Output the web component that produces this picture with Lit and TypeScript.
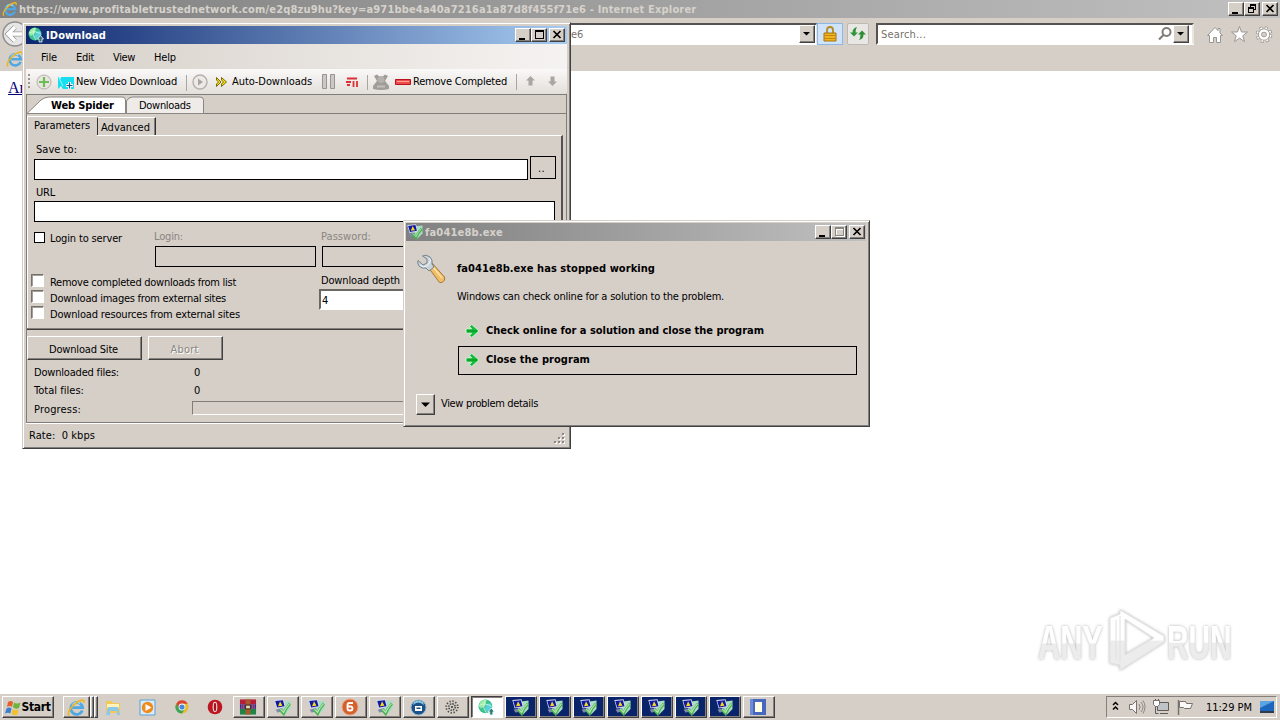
import { LitElement, html, css, svg } from 'lit';
import { customElement, property } from 'lit/decorators.js';

// Single line of text, tracked so that it fills the given width.
@customElement('fit-text')
export class FitText extends LitElement {
    @property({ type: Number }) width = 0;
    @property({ type: String }) text = '';

    static styles = css`
    :host {
      display: inline-block;
      height: 14px;
      line-height: 16px;
      white-space: pre;
      flex: none;
    }
  `;

    updated() {
        const span = this.renderRoot.querySelector('span')!;
        span.style.letterSpacing = '0';
        const natural = span.getBoundingClientRect().width;
        span.style.letterSpacing = `${(this.width - natural) / this.text.length}px`;
    }

    render() {
        return html`<span>${this.text}</span>`;
    }
}

const t = (text: string, width: number, cls = '') =>
    html`<fit-text class=${cls} .text=${text} .width=${width}></fit-text>`;

const ieIcon = (size: number) => html`
  <svg width=${size} height=${size} viewBox="0 0 16 16">
    <path d="M12.9 10.6A5 5 0 1 1 13.2 8.2H4.6" fill="none" stroke="#4fa8e4" stroke-width="2.3"/>
    <path d="M4.6 6.4A4 4 0 0 1 11 4.6" fill="none" stroke="#b5e3fa" stroke-width="1.1"/>
    <path d="M2 14.6C-.5 13 3.6 6.4 9 3.2c3.6-2 6-2 5 .9" fill="none" stroke="#efb51d" stroke-width="1.4"/>
  </svg>`;

const globeIcon = (size: number) => html`
  <svg width=${size} height=${size} viewBox="0 0 16 16">
    <circle cx="7" cy="7" r="6.5" fill="#3cc28e"/>
    <path d="M2 3Q5 0 8 1L7 6 3 9 1 7Z" fill="#9aeaa4"/>
    <path d="M8 5l4-1 1 4-4 4-3-2Z" fill="#5ccfdc"/>
    <path d="M1 6q6-3 12 1M7 1q-4 6 1 12" fill="none" stroke="#d6ffe6" stroke-width=".7"/>
    <path d="M12.500 8.500 15.500 12h-1.500v3h-3v-3H9.500z" fill="#2c7b74" stroke="#eef8ff" stroke-width=".8"/>
  </svg>`;

const appIcon = (size: number) => html`
  <svg width=${size} height=${size} viewBox="0 0 16 16">
    <path d="M7 2.500l8.500-1v8l-5 5-5-3Z" fill="#a9dcc4"/>
    <path d="M.3 1 9 .2l2 7.300L2.500 9Z" fill="#d4dcf2"/>
    <path d="M1.200 1.900 8.400 1.100 9.900 6.800 3 8Z" fill="#1118a0"/>
    <path d="M5.700 2 8 6.300 3.800 6.800Z" fill="#f7d820"/>
    <path d="M1.500 10l6-1.500 1 2.300-5 2.200Z" fill="#8088b0"/>
    <path d="M5.500 10 9 13.800Q11 8.500 15 4.500" fill="none" stroke="#4cb052" stroke-width="2.600"/>
    <path d="M6 9.600 9 12.700Q11 8 14.500 4.500" fill="none" stroke="#b2ecaa" stroke-width="1"/>
  </svg>`;

const goArrow = html`
  <svg class="go" width="15" height="14" viewBox="0 0 15 14">
    <path d="M1 4.800H6.600L4.400 2.200 6.800.6 14 7 6.800 13.400 4.400 11.800 6.600 9.200H1Z" fill="#14bd3c" stroke="#e8f5e4" stroke-width=".8"/>
    <path d="M2 7H12" stroke="#0a951e" stroke-width="1.200"/>
  </svg>`;

const glyphs: Record<string, unknown> = {
    min: svg`<path d="M3 9h6v2H3z"/>`,
    max: svg`<path d="M3 1h9v9H3zM4 3v6h7V3z" fill-rule="evenodd"/>`,
    maxOff: svg`<path d="M4 2h9v9H4zM5 4v6h7V4z" fill="#fff" fill-rule="evenodd"/><path d="M3 1h9v9H3zM4 3v6h7V3z" fill="#8a8681" fill-rule="evenodd"/>`,
    restore: svg`<path d="M5 1h6v6H9v3H3V4h2zM6 3v1h3v2h1V3zM4 6v3h4V6z" fill-rule="evenodd"/>`,
    close: svg`<path d="M3.500 2l7 7M10.500 2l-7 7" stroke="#000" stroke-width="1.700"/>`,
    down: svg`<path d="M3 4h7L6.500 7.500z"/>`,
};

const caption = (kind: string) => html`
  <button class="raised cap ${kind}"><svg width="14" height="12" viewBox="0 0 14 12">${glyphs[kind]}</svg></button>`;

const icons: Record<string, unknown> = {
    explorer: html`<svg width="18" height="18" viewBox="0 0 18 18"><path d="M2 3h6l1 2h7v10H2z" fill="#f0c95a"/><path d="M3 6h12v4H3z" fill="#fff3bc"/><path d="M4 9h10l2 8h-3v-4H6v4H2z" fill="#8cc9e8"/></svg>`,
    player: html`<svg width="17" height="17" viewBox="0 0 17 17"><path d="M1 1h15v15H1z" fill="#d7ecfb" stroke="#5c9fd4"/><circle cx="8.500" cy="8.500" r="5.700" fill="#f08a1c"/><path d="M6.500 5v7l6-3.500z" fill="#fff"/></svg>`,
    chrome: html`<svg width="16" height="16" viewBox="0 0 16 16"><circle cx="8" cy="8" r="6.500" fill="#e8bd28"/><path d="M2.300 4.700A6.500 6.500 0 0 1 13.700 4.700H8L5 9.500Z" fill="#d94436"/><path d="M2.300 4.700A6.500 6.500 0 0 0 8 14.500L11 9.700H5Z" fill="#3fa356"/><circle cx="8" cy="8" r="3.400" fill="#fff"/><circle cx="8" cy="8" r="2.600" fill="#4688dc"/></svg>`,
    opera: html`<svg width="16" height="16" viewBox="0 0 16 16"><circle cx="8" cy="8" r="7.300" fill="#bd1622"/><ellipse cx="8" cy="8" rx="2.400" ry="5.200" fill="#ead9d6"/><ellipse cx="8" cy="8" rx="1.200" ry="4.200" fill="#a8111c"/></svg>`,
    rar: html`<svg width="18" height="18" viewBox="0 0 19 18"><path d="M1 1h17v5H1z" fill="#b51f3a"/><path d="M1 6h17v5H1z" fill="#352f9d"/><path d="M1 11h17v6H1z" fill="#218447"/><path d="M7 1h5v16H7z" fill="#a85a2c"/><path d="M3 6v5M5 6v5M14 6v5M16 6v5" stroke="#c85b6b"/><path d="M7 7h5v4H7z" fill="#e8dcae" stroke="#3a2310"/></svg>`,
    orb: html`<svg width="18" height="18" viewBox="0 0 18 18"><circle cx="9" cy="9" r="8" fill="#d4602c" stroke="#e9a182"/><path d="M12 5H8.500Q6.500 5 6.500 7v3.500q0 2 2 2h1q2 0 2-2t-2-2h-3" fill="none" stroke="#fff" stroke-width="1.800"/></svg>`,
    blueOrb: html`<svg width="17" height="17" viewBox="0 0 17 17"><circle cx="8.500" cy="8.500" r="7.500" fill="#1c5288" stroke="#8fb4cd"/><path d="M3 6q5-5 11 0l-1-3q-5-3-9 0z" fill="#8bc8e0"/><path d="M5 7h7v5H5z" fill="#fff"/><path d="M6.500 8.500h4v1.500h-4z" fill="#224d78"/></svg>`,
    gear: html`<svg width="16" height="16" viewBox="0 0 16 16"><circle cx="8" cy="8" r="5.800" fill="none" stroke="#4d4b48" stroke-width="1.800" stroke-dasharray="1.300 1.700"/><circle cx="8" cy="8" r="3.200" fill="none" stroke="#3d3b39" stroke-width="1.400" stroke-dasharray="1.500 1"/><circle cx="8" cy="8" r="1" fill="#333"/></svg>`,
    book: html`<svg width="16" height="16" viewBox="0 0 16 16"><path d="M0 0h16v16H0z" fill="#4868bd"/><path d="M0 0h3v16H0z" fill="#6d8bd8"/><path d="M5 3h7v10H5z" fill="#fffde4"/></svg>`,
    globe: globeIcon(17),
    app: appIcon(17),
};

const tasks: [string, string][] = [
    ['rar', ''], ['app', ''], ['app', ''], ['orb', ''], ['app', ''], ['blueOrb', ''], ['gear', ''], ['globe', 'active'],
    ...Array.from({ length: 7 }, (): [string, string] => ['app', 'navy']),
    ['book', ''],
];

const siteOptions: [string, number][] = [
    ['Remove completed downloads from list', 186],
    ['Download images from external sites', 176],
    ['Download resources from external sites', 190],
];

const shared = css`
    * {
      box-sizing: border-box;
    }

    svg {
      display: block;
      flex: none;
    }

    button {
      font: inherit;
      padding: 0;
      color: #000;
      background: #d6cfc8;
      display: flex;
      align-items: center;
      justify-content: center;
      flex: none;
    }

    .raised {
      border: 1px solid;
      border-color: #fff #404040 #404040 #fff;
      box-shadow: inset -1px -1px #85807b;
    }

    .cap {
      width: 16px;
      height: 14px;
    }

    .cap.close {
      margin-left: 2px;
    }

    .caps {
      display: flex;
    }

    .title {
      display: flex;
      align-items: center;
      height: 18px;
      padding-right: 2px;
      font-weight: bold;
      color: #fff;
    }

    .grow {
      flex: 1;
    }

    .bold {
      font-weight: bold;
    }
`;

const frame = css`
    :host {
      display: flex;
      flex-direction: column;
      box-sizing: border-box;
      padding: 3px;
      background: #d6cfc8;
      border: 1px solid;
      border-color: #d6cfc8 #404040 #404040 #d6cfc8;
      box-shadow: inset 1px 1px #fff, inset -1px -1px #808080;
    }
`;

@customElement('download-window')
export class DownloadWindow extends LitElement {
    static styles = [shared, frame, css`
    .title {
      background: linear-gradient(90deg, #0e2870, #a6caf0);
      gap: 2px;
      padding: 0 2px;
    }

    .menu {
      height: 25px;
      padding: 0 0 0 15px;
      display: flex;
      align-items: center;
      background: linear-gradient(90deg, #d6cfc8, #f5f3f1);
    }

    .menu fit-text {
      margin-right: 19px;
    }

    .tools {
      height: 25px;
      display: flex;
      align-items: center;
      background: linear-gradient(#faf9f8, #e3dfda);
      border-radius: 0 0 3px 0;
    }

    .tools fit-text {
      margin-top: -1px;
    }

    .grip {
      width: 2px;
      height: 15px;
      margin-left: 2px;
      background: repeating-linear-gradient(#9b9690 0 2px, transparent 2px 4px);
    }

    .pane {
      height: 329px;
      border: 1px solid #807c78;
      box-shadow: 0 1px #fff;
    }

    .tabs {
      height: 19px;
    }

    .tabs text {
      font-size: 11px;
    }

    .strip {
      height: 21px;
      display: flex;
      align-items: flex-end;
    }

    .strip div {
      border-top: 1px solid #fff;
    }

    .current {
      width: 70px;
      height: 20px;
      padding: 1px 0 0 6px;
      margin-bottom: -1px;
      background: #d6cfc8;
      border-left: 1px solid #fff;
      position: relative;
    }

    .other {
      width: 59px;
      height: 18px;
      padding: 2px 0 0 3px;
      border-left: 1px solid #303030;
      border-right: 1px solid #303030;
      box-shadow: inset -1px 0 #85807b;
    }

    .page {
      width: 536px;
      height: 194px;
      padding: 6px 0 0 6px;
      border: 1px solid #fff;
      border-right: 2px solid #55524f;
      border-bottom: 0;
    }

    .rule {
      height: 2px;
      margin-top: -1px;
      border-top: 1px solid #85807b;
      background: #404040;
    }

    .field {
      height: 21px;
      border: 1px solid #000;
      background: #fff;
    }

    .save {
      display: flex;
      height: 24px;
    }

    .save .field {
      width: 494px;
      margin: 3px 2px 0 0;
    }

    .save button {
      width: 26px;
      height: 23px;
      border: 1px solid #000;
      padding-right: 3px;
    }

    .in {
      margin-left: 2px;
    }

    .block {
      display: block;
    }

    .url {
      margin: 5px 0 2px 2px;
    }

    .wide {
      width: 521px;
    }

    .login {
      display: grid;
      grid-template-columns: 120px 167px 1fr;
      height: 50px;
      padding-top: 7px;
      color: #898580;
    }

    .check {
      display: flex;
      align-items: center;
      gap: 4px;
      color: #000;
    }

    .login .check {
      height: 18px;
    }

    .box {
      width: 12px;
      height: 12px;
      border: 1px solid #000;
      background: #fff;
    }

    .login .box {
      width: 11px;
      height: 11px;
      margin: -1px 1px 0 0;
    }

    .login .field {
      margin: 3px 0 0 1px;
      width: 161px;
      background: #d6cfc8;
    }

    .options {
      display: flex;
      margin-left: -3px;
      padding-top: 2px;
    }

    .list {
      width: 288px;
      flex: none;
    }

    .depths {
      flex: 1;
    }

    .options .check {
      height: 16px;
      gap: 6px;
    }

    .options .box {
      width: 13px;
      height: 13px;
      margin-top: -3px;
      border: 1px solid;
      border-color: #75716d #fff #fff #75716d;
      box-shadow: inset 1px 1px #a39e99;
    }

    .depths > fit-text {
      margin-top: -1px;
    }

    .depth {
      height: 21px;
      margin-top: 2px;
      padding: 2px 1px;
      border: 2px solid;
      border-color: #6b6763 #fff #fff #6b6763;
      background: #fff;
    }

    .actions {
      display: flex;
      gap: 6px;
      margin-top: 6px;
    }

    .actions button {
      height: 24px;
      width: 115px;
      padding: 1px 2px 0 0;
    }

    .actions .off {
      width: 75px;
      color: #898580;
      text-shadow: 1px 1px #fff;
    }

    .stats {
      display: grid;
      grid-template-columns: 158px 1fr;
      grid-template-rows: 18px 18px 19px;
      align-items: center;
      padding: 3px 0 0 7px;
    }

    .stats .num {
      margin-left: 2px;
    }

    .bar {
      height: 14px;
      margin: -1px 8px 0 0;
      border: 1px solid;
      border-color: #807c78 #fff #fff #807c78;
    }

    .status {
      flex: 1;
      display: flex;
      align-items: center;
      justify-content: space-between;
      padding: 1px 0 0 3px;
    }

    .status svg {
      align-self: flex-end;
      margin-bottom: 1px;
    }
  `];

    render() {
        return html`
      <div class="title">
        ${globeIcon(16)}${t('IDownload', 60)}<span class="grow"></span>
        <div class="caps">${caption('min')}${caption('max')}${caption('close')}</div>
      </div>
      <div class="menu">${t('File', 16)}${t('Edit', 18)}${t('View', 22)}${t('Help', 22)}</div>
      <div class="tools">
        <div class="grip"></div>
        <svg width="46" height="22" viewBox="30 70 46 22">
          <circle cx="44" cy="81" r="7" fill="#e9e6e2" stroke="#b4b0ab"/>
          <path d="M44 76v10M39 81h10" stroke="#6fbd57" stroke-width="2.200"/>
          <path d="M58 76l3 2v-2h13v12H63l-2-3-3 3z" fill="#18dff0"/>
          <path d="M59 77l4 8" stroke="#8ffaff"/>
          <path d="M69.500 81v7M66 84.500h7" stroke="#fff" stroke-width="3"/>
          <path d="M69.500 81.500v6M66.500 84.500h6" stroke="#14508a" stroke-width="1.200"/>
        </svg>
        ${t('New Video Download', 101)}
        <svg width="55" height="22" viewBox="177 70 55 22">
          <path d="M186.500 74v16" stroke="#aaa59f"/>
          <circle cx="200" cy="81" r="7" fill="#eceae7" stroke="#b4b0ab" stroke-width="1.400"/>
          <path d="M198 77.500v7l5-3.500z" fill="#a9a5a0"/>
          <path d="M216.500 76.500l4.500 4.500-4.500 4.500v-2.500l2-2-2-2zM221.500 76.500l5 4.500-5 4.500v-2.500l2-2-2-2z" fill="#ffe000" stroke="#77670c"/>
        </svg>
        ${t('Auto-Downloads', 80)}
        <svg width="101" height="22" viewBox="312 70 101 22">
          <path d="M322.500 73.500h4v14h-4zM330.500 73.500h4v14h-4z" fill="#cbc8c5" stroke="#98948f"/>
          <path d="M347 77.500h10M346 81h5M347 84h3M353.500 80v6M357 80v6" stroke="#de2f36" stroke-width="1.800"/>
          <path d="M367.500 74v15" stroke="#aaa59f"/>
          <path d="M374 75l3-1.500 4 3.500 4-3.500 3 1.500-3 5 4 5v3q-8 2-16 0v-3l4-5z" fill="#a09c98"/>
          <circle cx="381" cy="78.500" r="3.500" fill="#b5b1ad"/>
          <path d="M377 85.500h8" stroke="#c3bfbb" stroke-width="2"/>
          <path d="M395.500 78.500h15v5h-15z" fill="#f04a4a" stroke="#b81420"/>
          <path d="M397 80.500h12" stroke="#ffa09a"/>
        </svg>
        ${t('Remove Completed', 94)}
        <svg width="56" height="22" viewBox="507 71 56 22">
          <path d="M516.500 74v16" stroke="#aaa59f"/>
          <path d="M530.500 76l4.500 4.500h-2.500v5h-4v-5H526z" fill="#aaa6a2"/>
          <path d="M552.500 86l4.500-4.500h-2.500v-5h-4v5H548z" fill="#aaa6a2"/>
        </svg>
      </div>
      <div class="pane">
        <div class="tabs">
          <svg width="539" height="19" viewBox="27 95 539 19">
            <path d="M27 113.500H566" stroke="#807c78"/>
            <path d="M126.500 113.500V101q2-4 6-4H200q3.500 0 3.500 3v13.500z" fill="#eeebe8" stroke="#8b8782"/>
            <path d="M27 113.500 41 100q4-3 8-3h73q3.500 0 3.500 3v13.500z" fill="#fff" stroke="#8b8782"/>
            <text x="51" y="109" font-weight="bold" textLength="63">Web Spider</text>
            <text x="139" y="109" textLength="52">Downloads</text>
          </svg>
        </div>
        <div class="strip">
          <div class="current">${t('Parameters', 56)}</div>
          <div class="other">${t('Advanced', 49)}</div>
        </div>
        <div class="page">
          ${t('Save to:', 41, 'in block')}
          <div class="save"><div class="field"></div><button>${t('..', 7)}</button></div>
          ${t('URL', 19, 'url block')}
          <div class="field wide"></div>
          <div class="login">
            <div class="check"><span class="box"></span>${t('Login to server', 72)}</div>
            <div>${t('Login:', 29, 'block')}<div class="field"></div></div>
            <div>${t('Password:', 50, 'block')}<div class="field"></div></div>
          </div>
          <div class="options">
            <div class="list">
              ${siteOptions.map(([label, width]) => html`
                <div class="check"><span class="box"></span>${t(label, width)}</div>`)}
            </div>
            <div class="depths">
              ${t('Download depth', 79, 'in block')}
              <div class="depth">${t('4', 6, 'block')}</div>
            </div>
          </div>
        </div>
        <div class="rule"></div>
        <div class="actions">
          <button class="raised">${t('Download Site', 69)}</button>
          <button class="raised off">${t('Abort', 28)}</button>
        </div>
        <div class="stats">
          ${t('Downloaded files:', 85)}${t('0', 6, 'num')}
          ${t('Total files:', 50)}${t('0', 6, 'num')}
          ${t('Progress:', 47)}<div class="bar"></div>
        </div>
      </div>
      <div class="status">
        ${t('Rate:  0 kbps', 66)}
        <svg width="14" height="13" viewBox="0 0 14 13">
          <path d="M9 2h2v2H9zM5 6h2v2H5zM9 6h2v2H9zM1 10h2v2H1zM5 10h2v2H5zM9 10h2v2H9z" fill="#fff" transform="translate(1 1)"/>
          <path d="M9 2h2v2H9zM5 6h2v2H5zM9 6h2v2H9zM1 10h2v2H1zM5 10h2v2H5zM9 10h2v2H9z" fill="#8b8782"/>
        </svg>
      </div>
    `;
    }
}

@customElement('crash-dialog')
export class CrashDialog extends LitElement {
    static styles = [shared, frame, css`
    :host {
      padding: 2px 3px 3px 2px;
    }

    .title {
      background: linear-gradient(90deg, #808080, #c0c0c0);
      color: #d6d2cb;
      gap: 2px;
      padding: 0 1px;
    }

    .body {
      display: flex;
      padding: 13px 10px 0;
      gap: 11px;
    }

    .main {
      flex: 1;
      padding-top: 7px;
    }

    .main > fit-text {
      display: block;
      margin-bottom: 14px;
    }

    .choice {
      display: flex;
      align-items: center;
      gap: 6px;
      height: 29px;
      width: 399px;
      padding: 0 0 3px 6px;
      margin-left: 1px;
      border: 1px solid transparent;
    }

    .choice.focus {
      border-color: #000;
    }

    .go {
      margin-top: 2px;
    }

    .details {
      display: flex;
      gap: 6px;
      margin: 19px 0 0 10px;
    }

    .details button {
      width: 19px;
      height: 21px;
    }

    .details fit-text {
      margin-top: 2px;
    }
  `];

    render() {
        return html`
      <div class="title">
        ${appIcon(16)}${t('fa041e8b.exe', 78)}<span class="grow"></span>
        <div class="caps">${caption('min')}${caption('maxOff')}${caption('close')}</div>
      </div>
      <div class="body">
        <svg width="30" height="30" viewBox="0 0 30 30">
          <path d="M12 13l4-4 12.500 14q1 4-3 5.500h-2z" fill="#f0bd68" stroke="#a67834"/>
          <path d="M17 13l9 11" stroke="#ffe2a4" stroke-width="1.500"/>
          <path d="M2 6.500 7 11l4-2V5L6.500 2Q10 0 14 3q3 3 2 7l2 3-5 4-3-3q-4 1-7-2-2-3-1-5.500z" fill="#c9d3da" stroke="#75818b"/>
          <path d="M4 11q3 3 7 1l3-4q1-3-1-4" fill="none" stroke="#f4f9fc"/>
        </svg>
        <div class="main">
          ${t('fa041e8b.exe has stopped working', 198, 'bold')}
          ${t('Windows can check online for a solution to the problem.', 267)}
          <div class="choice">${goArrow}${t('Check online for a solution and close the program', 278, 'bold')}</div>
          <div class="choice focus">${goArrow}${t('Close the program', 104, 'bold')}</div>
        </div>
      </div>
      <div class="details">
        <button class="raised"><svg width="15" height="13" viewBox="0 0 15 13"><path d="M3 4.500h9L7.500 9z"/></svg></button>
        ${t('View problem details', 97)}
      </div>
    `;
    }
}

@customElement('task-bar')
export class TaskBar extends LitElement {
    static styles = [shared, css`
    :host {
      display: flex;
      align-items: center;
      box-sizing: border-box;
      height: 28px;
      padding: 3px 3px 1px 2px;
      background: #d6cfc8;
      box-shadow: inset 0 2px #fff, inset 0 1px #d6cfc8;
    }

    .start {
      width: 52px;
      height: 22px;
      font-size: 12px;
      padding-right: 1px;
    }

    .start fit-text {
      margin-top: -2px;
    }

    .ie {
      width: 27px;
      height: 22px;
      margin-left: 9px;
    }

    .stacked {
      width: 4px;
      height: 22px;
      background: #d6cfc8;
    }

    .launch {
      display: flex;
      width: 131px;
      margin: 0 2px;
      padding: 0 8px 0 4px;
      justify-content: space-between;
      align-items: center;
    }

    .tasks {
      display: flex;
      gap: 2px;
      flex: 1;
    }

    .tasks button {
      width: 32px;
      height: 22px;
      padding-right: 2px;
    }

    .tasks .active {
      background: #fff;
      border-color: #404040 #fff #fff #404040;
      box-shadow: inset 1px 1px #85807b;
    }

    .tasks .navy {
      background: #0a246a;
    }

    .tray {
      width: 171px;
      height: 22px;
      display: flex;
      align-items: center;
      border: 1px solid;
      border-color: #85807b #fff #fff #85807b;
    }
  `];

    render() {
        return html`
      <button class="raised start">
        <svg width="17" height="17" viewBox="0 0 17 17">
          <path d="M3 3q3-2 5 0L7 8Q5 6 2 8z" fill="#e4602a"/>
          <path d="M9 3.500q3 2 6.500 0L14 9q-3 1.500-6-.5z" fill="#6eb43c"/>
          <path d="M1.500 9.500q3-2 5 0l-1.200 5Q3 13 0 14.500z" fill="#3a80cf"/>
          <path d="M7.700 10q3 2 6 .5L12.500 15.500q-3 1.500-6-.5z" fill="#f2c12c"/>
        </svg>
        ${t('Start', 29, 'bold')}
      </button>
      <button class="raised ie">${ieIcon(19)}</button>
      <div class="raised stacked"></div>
      <div class="raised stacked"></div>
      <div class="launch">${icons.explorer}${icons.player}${icons.chrome}${icons.opera}</div>
      <div class="tasks">${tasks.map(([icon, state]) => html`<button class="raised ${state}">${icons[icon]}</button>`)}</div>
      <div class="tray">
        <svg width="99" height="20" viewBox="1107 697 99 20">
          <path d="M1113 705l2.500-2.500 2.500 2.500M1113 709.500l2.500-2.500 2.500 2.500" fill="none" stroke="#000" stroke-width="1.500"/>
          <path d="M1129.500 704.500h3l4-4v13l-4-4h-3z" fill="#f7f6f5" stroke="#75716d"/>
          <path d="M1139 704q2 3 0 6M1141 702q4 5 0 10M1143 700.500q4 6 0 13" fill="none" stroke="#8b8782"/>
          <path d="M1157.500 702.500h11v8h-11z" fill="#bfc3c6" stroke="#5e5b58"/>
          <path d="M1160 713.500h8M1155.500 706v7.500h3M1155.500 700v-1M1158.500 700v-1" fill="none" stroke="#5e5b58"/>
          <path d="M1153.500 700.500h6v4l-2 2h-2l-2-2z" fill="#fff" stroke="#75716d"/>
          <path d="M1178.500 700v15" stroke="#75716d" stroke-width="1.500"/>
          <path d="M1179.500 701.500h6l1 2h6l-2 5h-6l-1-1h-4z" fill="#faf9f8" stroke="#75716d"/>
        </svg>
        ${t('11:29 PM', 46)}<span class="grow"></span>
        <svg width="18" height="16" viewBox="0 0 18 16"><path d="M2 2h14v10H2z" fill="#1c66bd"/><path d="M2 2h14L2 9z" fill="#5aa4e4"/><path d="M2 12h14v2H2z" fill="#303a49"/></svg>
      </div>
    `;
    }
}

@customElement('app-root')
export class AppRoot extends LitElement {
    static styles = [shared, css`
    :host {
      display: flex;
      flex-direction: column;
      position: relative;
      box-sizing: border-box;
      width: 1280px;
      height: 720px;
      overflow: hidden;
      background: #fff;
      font: 11px "DejaVu Sans Condensed", "DejaVu Sans", sans-serif;
      font-stretch: condensed;
      color: #000;
    }

    .title {
      background: linear-gradient(90deg, #808080, #c0c0c0);
      color: #d6d2cb;
      padding-left: 2px;
      gap: 1px;
    }

    .title > fit-text {
      margin-top: -1px;
    }

    .nav {
      height: 31px;
      display: flex;
      align-items: center;
      padding: 0 0 0 2px;
      background: #d6cfc8;
    }

    .well {
      height: 22px;
      flex: none;
      display: flex;
      align-items: center;
      background: #fff;
      color: #75716d;
      border: 2px solid;
      border-color: #55524f #e9e6e2 #fff #55524f;
    }

    .address {
      width: 779px;
      margin: 0 0 0 8px;
      border-right-width: 1px;
      justify-content: flex-end;
    }

    .address fit-text {
      margin-right: 216px;
    }

    .address .drop {
      margin-right: 1px;
    }

    .drop {
      width: 16px;
      height: 18px;
    }

    .lock {
      width: 26px;
      height: 22px;
      background: #cfe3fb;
      border: 1px solid #8db7e4;
    }

    .refresh {
      width: 22px;
      height: 22px;
      margin: 0 7px 0 4px;
      background: #e9e7e4;
      border: 1px solid #bdb9b4;
      border-radius: 2px;
    }

    .search {
      width: 318px;
      margin-right: 6px;
      padding-left: 3px;
    }

    .search .drop {
      margin-right: 3px;
    }

    .tabbar {
      height: 22px;
      padding: 1px 0 0 6px;
      background: #d6cfc8;
    }

    .content {
      flex: 1;
      padding: 7px 8px;
      font: 16px/20px "Liberation Serif", serif;
    }

    .content a {
      color: #00007a;
      text-decoration: underline;
    }

    download-window {
      position: absolute;
      left: 22px;
      top: 22px;
      width: 549px;
      height: 427px;
    }

    crash-dialog {
      position: absolute;
      left: 403px;
      top: 220px;
      width: 467px;
      height: 207px;
    }

    .watermark {
      position: absolute;
      left: 1020px;
      top: 602px;
    }

    .watermark text {
      font: bold 48px "Liberation Sans", sans-serif;
    }
  `];

    render() {
        return html`
      <div class="title">
        ${ieIcon(16)}${t('https://www.profitabletrustednetwork.com/e2q8zu9hu?key=a971bbe4a40a7216a1a87d8f455f71e6 - Internet Explorer', 677)}<span class="grow"></span>
        <div class="caps">${caption('min')}${caption('restore')}${caption('close')}</div>
      </div>
      <div class="nav">
        <svg width="28" height="28" viewBox="0 0 28 28">
          <circle cx="13" cy="14" r="12" fill="#e7e6e6" stroke="#8f8e8e" stroke-width="1.500"/>
          <path d="M13 7l-7 7 7 7M7 14h14" fill="none" stroke="#9b9b9b" stroke-width="5"/>
          <path d="M13 7l-7 7 7 7M7 14h14" fill="none" stroke="#fff" stroke-width="3.400"/>
        </svg>
        <div class="well address">${t('e6', 12)}
          <button class="raised drop"><svg width="14" height="12" viewBox="0 0 14 12">${glyphs.down}</svg></button>
        </div>
        <button class="lock">
          <svg width="16" height="18" viewBox="0 0 16 18"><path d="M5 8V5q0-3 3-3t3 3v3" fill="none" stroke="#b58b20" stroke-width="1.800"/><path d="M2 8h12v8H2z" fill="#eeb31e" stroke="#a8750c"/><path d="M2 10.500h12M2 13.500h12" stroke="#c28812"/></svg>
        </button>
        <button class="refresh">
          <svg width="18" height="16" viewBox="0 0 18 16"><path d="M1 6.500h2.500Q3.500 2 8 1 6.500 3 6.500 6.500H9L5 10.500z" fill="#2f9638"/><path d="M9 8.500l4-4 4 4h-2.500q0 4.500-4.500 5.500 1.500-2 1.500-5.500z" fill="#2f8d36"/></svg>
        </button>
        <div class="well search">
          ${t('Search...', 45)}<span class="grow"></span>
          <svg width="16" height="16" viewBox="0 0 16 16"><circle cx="9.500" cy="6" r="4" fill="none" stroke="#807c78" stroke-width="2"/><path d="M6.500 9 2 13.500" stroke="#807c78" stroke-width="2.200"/></svg>
          <button class="raised drop"><svg width="14" height="12" viewBox="0 0 14 12">${glyphs.down}</svg></button>
        </div>
        <svg width="76" height="24" viewBox="1200 23 76 24">
          <g fill="#fff" stroke="#9a9691">
            <path d="M1207.500 36.500 1215 28.500l3 3v-2h2v4.500l2.500 2.500h-2v7h-4v-5h-3v5h-4v-7z"/>
            <path d="M1239.500 27.500l2 5.500h6l-4.700 3.700 1.700 6-5-3.600-5 3.600 1.700-6-4.700-3.700h6z"/>
          </g>
          <circle cx="1264" cy="35.500" r="6.300" fill="none" stroke="#9a9691" stroke-width="4" stroke-dasharray="2.700 2.250"/>
          <circle cx="1264" cy="35.500" r="6" fill="none" stroke="#fff" stroke-width="3" stroke-dasharray="1.700 3.010" stroke-dashoffset="-.5"/>
          <circle cx="1264" cy="35.500" r="4" fill="none" stroke="#9a9691" stroke-width="4"/>
          <circle cx="1264" cy="35.500" r="4" fill="none" stroke="#fff" stroke-width="2.400"/>
        </svg>
      </div>
      <div class="tabbar">${ieIcon(18)}</div>
      <div class="content"><a>Ar</a></div>
      <task-bar></task-bar>

      <svg class="watermark" width="240" height="76" viewBox="1020 602 240 76">
        <defs>
          <linearGradient id="fade" x1="0" y1="0" x2="0" y2="1">
            <stop offset=".5" stop-color="#fff"/><stop offset=".52" stop-color="#ececec"/>
          </linearGradient>
          <filter id="soft" x="-10%" y="-10%" width="120%" height="130%">
            <feDropShadow dx="0" dy="0" stdDeviation="1.500" flood-color="#777" flood-opacity=".6"/>
          </filter>
        </defs>
        <g filter="url(#soft)" fill="url(#fade)">
          <text transform="translate(1038 659) scale(.64 1)">ANY</text>
          <text transform="translate(1167 659) scale(.62 1)">RUN</text>
          <path d="M1120 610l44 26v6l-44 28v-5l-10-2v-45l10-4zm5 9v36l29-17z" fill-rule="evenodd" stroke="#e2e2e2"/>
          <path d="M1116 620v40M1120 616v46" fill="none" stroke="#e0e0e0"/>
        </g>
      </svg>
      <download-window></download-window>
      <crash-dialog></crash-dialog>
    `;
    }
}
